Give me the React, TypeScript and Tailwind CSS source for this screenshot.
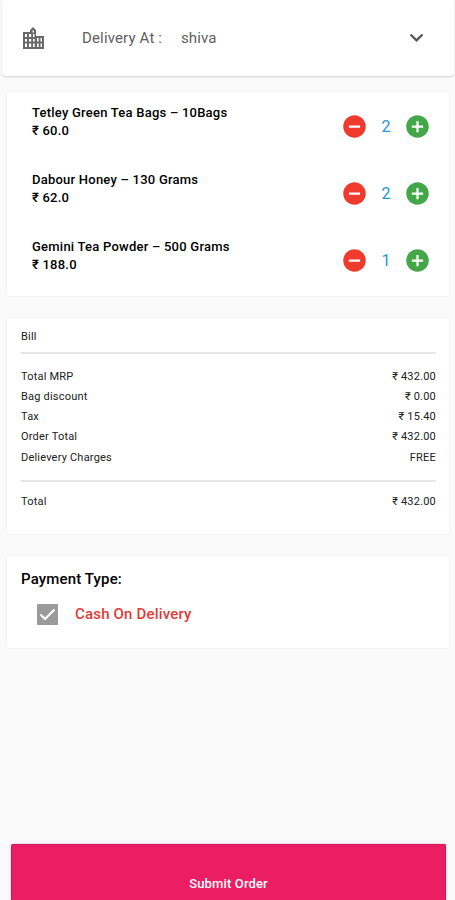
import React, { useState } from 'react';
import {
  MdAddCircle, MdCheckBoxOutlineBlank, MdKeyboardArrowDown, MdRemoveCircle
} from 'react-icons/md';

interface CartItem {
  id: number;
  name: string;
  price: string;
  qty: number;
}

const INITIAL_ITEMS: CartItem[] = [
  { id: 1, name: 'Tetley Green Tea Bags – 10Bags', price: '60.0', qty: 2 },
  { id: 2, name: 'Dabour Honey – 130 Grams', price: '62.0', qty: 2 },
  { id: 3, name: 'Gemini Tea Powder – 500 Grams', price: '188.0', qty: 1 },
];

const BILL_ROWS = [
  { label: 'Total MRP', value: '₹ 432.00' },
  { label: 'Bag discount', value: '₹ 0.00' },
  { label: 'Tax', value: '₹ 15.40' },
  { label: 'Order Total', value: '₹ 432.00' },
  { label: 'Delievery Charges', value: 'FREE' },
];

// city block, windows cut out with evenodd
const CityIcon = () => (
  <svg width="21" height="22" viewBox="0 0 21 22" fill="#686868" fillRule="evenodd">
    <path d="M0 5h7V3l3-3 3 3v6h8v13H0V5zM2 7v3h2V7H2zm4 0v3h2.200V7H6zm3.500-3.500v2h1.500v-2H9.500zM10 7v3h1.500V7H10zM2 12v2.500h2V12H2zm4 0v2.500h2.200V12H6zm4 0v2.500h1.700V12H10zm4-1v3.500h1.700V11H14zm3.500 0v3.500H19V11h-1.500zM2 16.500V20h2v-3.500H2zm4 0V20h2.200v-3.500H6zm4 0V20h1.700v-3.500H10zm4 0V20h1.700v-3.500H14zm3.500 0V20H19v-3.500h-1.500z" />
  </svg>
);

const CheckedBox = () => (
  <svg width="21" height="21" viewBox="0 0 21 21" fill="none">
    <rect width="21" height="21" rx="1" fill="#9b9b9b" />
    <path d="M3.500 10.500 8 15l9.500-9.500" stroke="#fff" strokeWidth="2.200" />
  </svg>
);

const BillRow = ({ label, value }: { label: string; value: string }) => (
  <div className="flex h-[20.2px] items-center justify-between">
    <span>{label}</span>
    <span>{value}</span>
  </div>
);

const App: React.FC = () => {
  const [items, setItems] = useState(INITIAL_ITEMS);
  const [cod, setCod] = useState(true);

  const changeQty = (id: number, delta: number) => {
    setItems(prev => prev.map(i => (i.id === id ? { ...i, qty: Math.max(0, i.qty + delta) } : i)));
  };

  return (
    <div className="flex h-[900px] w-[455px] flex-col overflow-hidden bg-[#fafafa] font-['Roboto','Noto_Sans',sans-serif] text-[#212121]">
      {/* delivery address */}
      <header className="mr-px ml-[2px] flex h-[76px] shrink-0 items-center rounded-b-[4px] bg-white pr-[24px] pl-[21px] shadow-[0_1px_2px_rgba(0,0,0,0.16)]">
        <CityIcon />
        <span className="ml-[38px] w-[99px] text-[15px] leading-5 tracking-[0.15px] whitespace-nowrap text-[#606060]">Delivery At :</span>
        <span className="flex-1 text-[15px] leading-5 tracking-[0.1px] text-[#606060]">shiva</span>
        <MdKeyboardArrowDown size={27} className="mt-[-2px] text-[#555]" />
      </header>

      {/* cart */}
      <section className="mr-[6px] ml-[7px] mt-4 h-[204px] shrink-0 rounded-[2px] bg-white pt-px pr-[18px] pl-[25px] shadow-[0_0_2px_rgba(0,0,0,0.08)]">
        {items.map(item => (
          <div key={item.id} className="flex h-[67.2px] items-center justify-between">
            <div className="mt-[-9px] text-[13px] leading-[18px] font-medium tracking-[0.23px] text-black">
              <p>{item.name}</p>
              <p>₹ {item.price}</p>
            </div>
            <div className="flex items-center">
              <button onClick={() => changeQty(item.id, -1)}>
                <MdRemoveCircle size={27} className="text-[#f03a2e]" />
              </button>
              <span className="w-9 text-center text-base text-[#2196d8]">{item.qty}</span>
              <button onClick={() => changeQty(item.id, 1)}>
                <MdAddCircle size={27} className="text-[#43a647]" />
              </button>
            </div>
          </div>
        ))}
      </section>

      {/* bill */}
      <section className="mr-[6px] ml-[7px] mt-[22px] h-[216px] shrink-0 rounded-[2px] bg-white pt-[9px] pr-[13px] pl-[14px] text-[11px] tracking-[0.2px] shadow-[0_0_2px_rgba(0,0,0,0.08)]">
        <h2 className="h-[25px] leading-5">Bill</h2>
        <div className="mb-[13px] h-[2px] bg-[#e6e6e6]" />
        {BILL_ROWS.map(row => <BillRow key={row.label} {...row} />)}
        <div className="mt-[12px] mb-[10px] h-[2px] bg-[#e6e6e6]" />
        <BillRow label="Total" value="₹ 432.00" />
      </section>

      {/* payment */}
      <section className="mr-[6px] ml-[7px] mt-[22px] h-[92px] shrink-0 rounded-[2px] bg-white px-[14px] pt-[13px] shadow-[0_0_2px_rgba(0,0,0,0.08)]">
        <h2 className="text-[15px] leading-5 font-medium tracking-[0.15px] text-black">Payment Type:</h2>
        <button className="mt-[11px] ml-[12px] flex h-7 items-center" onClick={() => setCod(!cod)}>
          <span className="flex size-7 items-center justify-center pl-px">
            {cod ? <CheckedBox /> : <MdCheckBoxOutlineBlank size={28} className="text-[#9b9b9b]" />}
          </span>
          <span className="ml-[14px] text-[15px] leading-5 font-medium tracking-[0.18px] text-[#e53935]">Cash On Delivery</span>
        </button>
      </section>

      <button className="mr-[9px] ml-[11px] mt-auto h-14 shrink-0 rounded-t-[2px] border border-b-0 border-[#d4145a] bg-[#eb1e63] pt-[22px] text-[13px] leading-[18px] font-medium tracking-[0.15px] text-white shadow-[0_0_3px_rgba(0,0,0,0.2)]">
        Submit Order
      </button>
    </div>
  );
};

export default App;
